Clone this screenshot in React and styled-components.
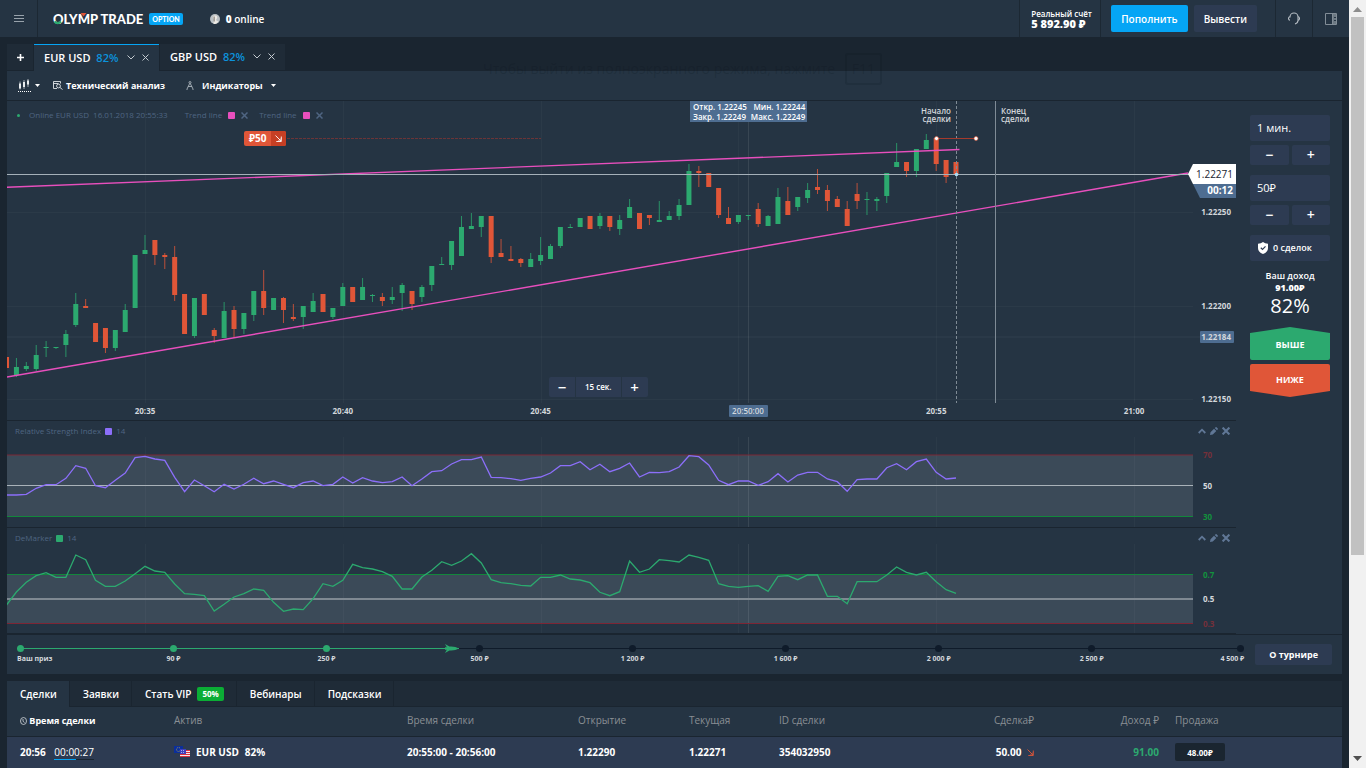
import React from "react";
import styled, { createGlobalStyle, css } from "styled-components";

const STEP = 9.89;
const START = -14;
const columnX = (i) => 138 + STEP * i;
const GRID = [0, 20, 40, 60, 80, 100].map(columnX);
const TIMES = ["20:35", "20:40", "20:45", "", "20:55", "21:00"];

// high, body top, body bottom, low, rising
const CANDLES = [
    [256, 256, 267, 267, 0], [257, 266, 274, 276, 1], [261, 265, 268, 270, 1], [244, 254, 268, 270, 1],
    [240, 246, 247, 256, 1], [246, 246, 247, 248, 1], [229, 233, 244, 256, 1], [192, 203, 224, 226, 1],
    [198, 205, 207, 207, 0], [222, 222, 241, 241, 0], [227, 227, 247, 252, 0], [229, 229, 247, 250, 1],
    [203, 209, 231, 231, 1], [154, 154, 207, 207, 1], [134, 149, 153, 153, 1], [139, 139, 154, 164, 0],
    [152, 154, 156, 168, 0], [145, 156, 194, 200, 0], [193, 193, 233, 233, 0], [197, 197, 235, 237, 1],
    [193, 193, 214, 214, 0], [227, 229, 235, 242, 0], [201, 210, 237, 237, 1], [205, 209, 228, 237, 0],
    [212, 212, 228, 233, 1], [190, 190, 214, 220, 1], [169, 190, 207, 214, 0], [197, 197, 209, 209, 1],
    [196, 197, 209, 222, 0], [203, 216, 218, 220, 0], [205, 205, 216, 228, 1], [192, 200, 211, 211, 1],
    [193, 193, 211, 211, 0], [207, 207, 216, 218, 1], [182, 186, 205, 205, 1], [186, 186, 201, 201, 0],
    [177, 186, 199, 199, 1], [193, 194, 195, 201, 1], [192, 196, 200, 205, 0], [186, 196, 199, 203, 1],
    [182, 184, 192, 210, 1], [190, 190, 203, 209, 0], [184, 186, 196, 201, 1], [165, 165, 184, 190, 1],
    [156, 163, 164, 164, 1], [140, 140, 164, 169, 1], [115, 126, 155, 155, 1], [112, 125, 128, 128, 1],
    [115, 115, 126, 136, 1], [115, 115, 156, 162, 0], [138, 152, 156, 156, 0], [145, 158, 160, 160, 0],
    [157, 158, 162, 166, 0], [152, 158, 166, 166, 1], [136, 154, 160, 164, 1], [143, 145, 158, 158, 1],
    [126, 126, 145, 147, 1], [123, 126, 127, 127, 1], [117, 117, 126, 126, 1], [115, 115, 128, 128, 0],
    [112, 115, 125, 128, 1], [115, 115, 126, 130, 0], [114, 119, 128, 134, 1], [98, 106, 117, 117, 1],
    [112, 112, 128, 128, 0], [114, 114, 117, 124, 0], [100, 119, 121, 121, 1], [110, 115, 119, 119, 1],
    [98, 104, 115, 119, 1], [63, 70, 104, 104, 1], [65, 70, 72, 86, 0], [72, 72, 86, 86, 0],
    [87, 87, 114, 117, 0], [106, 117, 123, 123, 0], [114, 114, 121, 123, 1], [114, 114, 115, 119, 1],
    [102, 108, 123, 126, 0], [114, 115, 125, 125, 1], [87, 96, 123, 123, 1], [86, 100, 114, 114, 0],
    [96, 96, 106, 110, 1], [82, 89, 97, 102, 1], [68, 86, 89, 93, 0], [84, 89, 100, 110, 0],
    [95, 98, 106, 106, 0], [100, 108, 125, 125, 0], [82, 93, 100, 108, 0], [91, 98, 99, 114, 1],
    [96, 98, 100, 110, 1], [72, 72, 95, 102, 1], [42, 61, 66, 66, 1], [61, 61, 70, 76, 0],
    [48, 48, 70, 76, 1], [33, 39, 48, 48, 1], [37, 37, 63, 70, 0], [59, 59, 76, 82, 0],
    [61, 61, 74, 74, 0],
];

const RSI = [
    74, 74, 73.3, 67.3, 63.7, 63.7, 57.3, 44.7, 47.3, 64.7, 66.7, 59.3, 52, 36.7, 35.3, 38, 39.3, 56.3, 70.7, 59,
    64.7, 70.7, 63.3, 68, 63.3, 57.3, 62.7, 60, 63.3, 66.7, 61.7, 60, 64.7, 63.3, 56, 62, 56.7, 60, 61.7, 60.7,
    56, 64.7, 58, 50.7, 49.7, 43, 38.7, 38.7, 36, 56.3, 56.7, 57.7, 59.3, 57.3, 56, 52, 44.7, 44.7, 40.7, 48.7,
    43.3, 50.7, 47.3, 42, 56, 51.3, 51.7, 50.7, 46, 34.7, 35.7, 44, 59.3, 63.7, 60, 60, 64.3, 60.7, 52.7, 61,
    54, 51.3, 51.3, 58, 60.7, 70.3, 58.7, 58, 58, 46.7, 42.7, 48.7, 40.7, 38, 51.3, 58, 57,
];

const DEMARKER = [
    77, 64, 54.3, 47.7, 44.7, 49.3, 49.3, 27, 31.7, 52.3, 58.3, 58.3, 53, 45.7, 38.3, 43, 44.3, 56, 65.7, 66.3,
    67.7, 83, 76.3, 69, 65.7, 61, 62.3, 74.3, 83.3, 81, 81.7, 70.7, 55.7, 58.3, 52.3, 36.3, 39.7, 41, 43.7, 48.3,
    61, 61, 49, 42.3, 33.7, 37.3, 33, 25.7, 35, 51.7, 54.7, 55.7, 57.3, 58, 49.3, 49.3, 47, 51, 52, 54.7,
    64.3, 67.7, 63.7, 33, 44.3, 41, 31.7, 32.7, 34, 27, 29.3, 32.3, 55.7, 58.3, 59.3, 58.3, 57.7, 63.3, 48.3, 47.7,
    51.7, 47, 47, 68.3, 68.3, 75.7, 53.7, 53.7, 53.7, 47, 39, 44.3, 47, 44.3, 53.7, 61.7, 65.3,
];

const toPoints = (values) => values.map((y, i) => `${columnX(START + i).toFixed(1)},${y}`).join(" ");

const PRIZES = ["Ваш приз", "90 ₽", "250 ₽", "500 ₽", "1 200 ₽", "1 600 ₽", "2 000 ₽", "2 500 ₽", "4 500 ₽"];

const CrossIcon = ({ size = 7, width = 1 }) => (
    <svg width={size} height={size} viewBox="0 0 7 7" fill="none" stroke="currentColor" strokeWidth={width}>
        <path d="M.5.5l6 6M6.5.5l-6 6" />
    </svg>
);

const ChevronIcon = () => (
    <svg width="8" height="5" viewBox="0 0 8 5" fill="none" stroke="currentColor">
        <path d="M.5.5L4 4 7.5.5" />
    </svg>
);

const CaretIcon = () => (
    <svg width="5" height="3" viewBox="0 0 5 3" fill="currentColor">
        <path d="M0 0h5L2.500 3z" />
    </svg>
);

const DownRightIcon = () => (
    <svg width="7" height="7" viewBox="0 0 7 7" fill="none" stroke="currentColor" strokeWidth=".9">
        <path d="M.5.5l5.500 5.500M6.300 1.500v5h-5M3.500 6L6 3.500" />
    </svg>
);

const PanelIcons = () => (
    <PanelActions>
        <IconButton aria-label="Свернуть">
            <svg width="8" height="6" viewBox="0 0 8 6" fill="none" stroke="currentColor" strokeWidth="1.800">
                <path d="M.7 5L4 1.700 7.300 5" />
            </svg>
        </IconButton>
        <IconButton aria-label="Изменить">
            <svg width="8" height="8" viewBox="0 0 8 8" fill="currentColor">
                <path d="M0 8l.5-2.800L4 1.700l2.300 2.300L2.800 7.500zM4.700 1l1-.8q.4-.3.800 0l1.300 1.300q.3.400 0 .8L7 3.300z" />
            </svg>
        </IconButton>
        <IconButton aria-label="Закрыть">
            <CrossIcon size={8} width={1.8} />
        </IconButton>
    </PanelActions>
);

const Grid = ({ top, bottom }) => (
    <g stroke="#ffffff" strokeOpacity=".03">
        {GRID.map((x) => (
            <path key={x} d={`M${Math.round(x) + 0.5} ${top}V${bottom}`} />
        ))}
        <path d={`M741.5 ${top}V${bottom}`} strokeOpacity=".09" />
    </g>
);

const PriceChart = () => (
    <ChartSvg viewBox="0 0 1229 319">
        <Grid top={0} bottom={302} />
        <g stroke="#ffffff" strokeOpacity=".03">
            <path d="M0 111.5H1186M0 205.5H1186M0 298.5H1186" />
            <path d="M0 236H1193" strokeOpacity=".06" />
        </g>
        <path d="M280 37.500H534" stroke="#6b3437" strokeDasharray="3 1" />
        {CANDLES.map(([high, top, bottom, low, up], i) => {
            const x = columnX(START + i);
            return (
                <g key={i} fill={up ? "#2ca96f" : "#e05638"}>
                    <rect x={x - 0.5} y={high} width="1" height={low - high} fillOpacity=".8" />
                    <rect x={x - 2.5} y={top} width="5" height={bottom - top} />
                </g>
            );
        })}
        <g stroke="#e84fbd" strokeWidth="1.400">
            <path d="M0 86.300L952.500 48.500" />
            <path d="M0 276L1181 72" />
        </g>
        <path d="M0 73.500H1182" stroke="#a5b0b9" />
        <path d="M949.5 0V302" stroke="#7f8b95" strokeDasharray="3 2" />
        <path d="M988.5 0V302" stroke="#7f8b96" />
        <path d="M929.500 37.500H969" stroke="#a53a2c" />
        <g fill="#ffffff" stroke="#e05638" strokeWidth=".6">
            <circle cx="929.5" cy="37.500" r="2" />
            <circle cx="969" cy="37.500" r="2" />
        </g>
        <circle cx="949.5" cy="73.500" r="1.800" fill="#a9dcf5" />
        <AxisText x="944" y="13" textAnchor="end">Начало</AxisText>
        <AxisText x="944" y="21" textAnchor="end">сделки</AxisText>
        <AxisText x="994" y="13">Конец</AxisText>
        <AxisText x="994" y="21">сделки</AxisText>
        <path d="M1181 73l5-10h43v20h-43z" fill="#ffffff" />
        <path d="M1186 83h43v14h-36z" fill="#4e6d91" />
        <TagText x="1226" y="77" textAnchor="end">1.22271</TagText>
        <TagText x="1226" y="93" textAnchor="end" $light>00:12</TagText>
        <AxisText x="1224" y="114" textAnchor="end" $bold>1.22250</AxisText>
        <AxisText x="1224" y="208" textAnchor="end" $bold>1.22200</AxisText>
        <rect x="1193" y="230" width="34" height="12" rx="1" fill="#4e6d91" />
        <AxisText x="1224" y="239" textAnchor="end" $bold>1.22184</AxisText>
        <AxisText x="1224" y="301" textAnchor="end" $bold>1.22150</AxisText>
        {TIMES.map((time, i) => (
            <AxisText key={i} x={GRID[i]} y="313" textAnchor="middle" $bold>{time}</AxisText>
        ))}
        <rect x="722" y="304" width="39" height="12" rx="1" fill="#4e6d91" />
        <AxisText x="741" y="313" textAnchor="middle">20:50:00</AxisText>
    </ChartSvg>
);

const Oscillator = ({ title, period, color, values, height, lines, middleWidth = 1 }) => (
    <Panel>
        <Legend $small>
            {title} <Swatch $color={color} /> {period}
        </Legend>
        <PanelIcons />
        <ChartSvg viewBox={`0 0 1229 ${height}`}>
            <rect x="0" y={lines[0].y} width="1186" height={lines[2].y - lines[0].y} fill="#3b4a58" />
            <Grid top={16} bottom={height} />
            {lines.map(({ y, text, stroke, fill }, i) => (
                <g key={text}>
                    <path d={`M0 ${y}H1186`} stroke={stroke} strokeWidth={i === 1 ? middleWidth : 1} />
                    <AxisText x="1196" y={Math.round(y) + 3} $fill={fill} $bold>{text}</AxisText>
                </g>
            ))}
            <polyline points={toPoints(values)} fill="none" stroke={color} strokeWidth="1.300" />
        </ChartSvg>
    </Panel>
);

const Flags = () => (
    <svg width="16" height="12" viewBox="0 0 16 12">
        <path d="M0 0h9v7H0z" fill="#0b2f9c" />
        <circle cx="4.500" cy="3.500" r="2" fill="none" stroke="#b9a544" strokeWidth=".8" strokeDasharray="1 .8" />
        <path d="M6 4h10v7H6z" fill="#f3e9ec" />
        <path d="M6 6.500h10M6 8.500h10M6 10.500h10M11 4.500h5" stroke="#d9313f" />
        <path d="M6 3h6v5H6z" fill="#3d3fbd" />
        <path d="M7 4.500h4M7 6.500h4" stroke="#a9a6ea" strokeDasharray="1 1" />
    </svg>
);

const App = () => {
    return (
        <Page>
            <GlobalStyle />
            <Main>
                <Header>
                    <MenuButton aria-label="Меню">
                        <svg width="10" height="7" viewBox="0 0 10 7" stroke="#98a2ab">
                            <path d="M0 .5h10M0 3.500h10M0 6.500h10" />
                        </svg>
                    </MenuButton>
                    <Logo href="#">
                        <LogoName>
                            OLYMP TRADE
                            <LogoMarks viewBox="0 0 92 14">
                                <path d="M1.500 9.500a4.200 4.200 0 0 0 6.500 0" fill="none" stroke="#2ca96f" strokeWidth="2.200" />
                                <path d="M27.500 1h6l-3 3.500z" fill="#e05638" />
                            </LogoMarks>
                        </LogoName>
                        <OptionBadge>OPTION</OptionBadge>
                    </Logo>
                    <Online>
                        <svg width="10" height="10" viewBox="0 0 10 10">
                            <circle cx="5" cy="5" r="5" fill="#b9bfc4" />
                            <path d="M5 1.500a2 2 0 0 1 1.300 3.700v1.300l2 1A5 5 0 0 1 5 10a5 5 0 0 1-1.500-.3V5A2 2 0 0 1 5 1.500z" fill="#ece9e4" />
                            <path d="M3.600 2.500h1v5h-1z" fill="#716b66" />
                        </svg>
                        <span><b>0</b> online</span>
                    </Online>
                    <Account>
                        <span>Реальный счёт</span>
                        <strong>5 892.90 ₽</strong>
                    </Account>
                    <HeaderActions>
                        <Button $primary>Пополнить</Button>
                        <Button>Вывести</Button>
                    </HeaderActions>
                    <HeaderIcon aria-label="Поддержка">
                        <svg width="12" height="13" viewBox="0 0 12 13" fill="none" stroke="#b6bdc4" strokeWidth="1.100">
                            <path d="M2 5.500V5a4 4 0 0 1 8 0v3.500q0 2.500-3 3.500" />
                            <path d="M2 4.800Q.5 5 .5 6.500T2 8.200M10 4.800q1.500.2 1.500 1.700T10 8.200" />
                        </svg>
                    </HeaderIcon>
                    <HeaderIcon aria-label="Панель">
                        <svg width="12" height="12" viewBox="0 0 12 12" fill="none" stroke="#828d97">
                            <path d="M.5.5h11v11H.5zM7.500.5v11" />
                            <path d="M8 1h3v10H8z" fill="#6d7983" stroke="none" />
                            <path d="M9 4.500h2M9 7.500h2" stroke="#253443" />
                        </svg>
                    </HeaderIcon>
                </Header>

                <PairTabs>
                    <AddTab aria-label="Добавить">
                        <svg width="7" height="7" viewBox="0 0 7 7" stroke="#ffffff" strokeWidth="1.600">
                            <path d="M3.500 0v7M0 3.500h7" />
                        </svg>
                    </AddTab>
                    {["EUR USD", "GBP USD"].map((pair, i) => (
                        <PairTab key={pair} $active={i === 0}>
                            <PairName>{pair} <em>82%</em></PairName>
                            <IconButton $light aria-label="Выбрать"><ChevronIcon /></IconButton>
                            <IconButton $light aria-label="Закрыть"><CrossIcon /></IconButton>
                        </PairTab>
                    ))}
                    <FullscreenHint>
                        Чтобы выйти из полноэкранного режима, нажмите <kbd>F11</kbd>
                    </FullscreenHint>
                </PairTabs>

                <Workspace>
                    <Toolbar>
                        <ToolButton>
                            <svg width="13" height="13" viewBox="0 0 13 13" fill="#ffffff">
                                <path d="M1 4.500h2v5H1zM5 3h2v5H5zM9 1.500h2v4H9z" />
                                <path d="M2 2.500v8M6 1v9M10 0v8" stroke="#c5ccd2" strokeWidth=".8" />
                                <path d="M0 12.500h13" stroke="#ffffff" strokeDasharray="1 1" />
                            </svg>
                            <CaretIcon />
                        </ToolButton>
                        <ToolButton $wide>
                            <svg width="10" height="9" viewBox="0 0 10 9" fill="none" stroke="#dfe3e6" strokeWidth=".9">
                                <path d="M4 7.500H.5v-7h7v2M.5 2.500h5" />
                                <circle cx="5.500" cy="5" r="1.900" />
                                <path d="M7 6.500l2.500 2" />
                            </svg>
                            Технический анализ
                        </ToolButton>
                        <ToolButton>
                            <svg width="8" height="9" viewBox="0 0 8 9" fill="none" stroke="#aab3bb" strokeWidth=".9">
                                <circle cx="4" cy="1.500" r="1" />
                                <path d="M3.700 2.500L1 8M4.300 2.500L7 8M2 5.500h4M.5 8.500h1M6.500 8.500h1" />
                            </svg>
                            <ToolLabel>Индикаторы</ToolLabel>
                            <CaretIcon />
                        </ToolButton>
                    </Toolbar>

                    <Board>
                        <Charts>
                            <Panel>
                                <Legend>
                                    <LiveDot />
                                    <span>Online EUR USD&nbsp; 16.01.2018 20:55:33</span>
                                    <TrendItem>Trend line <Swatch $color="#e84fbd" /> <CrossIcon width={1.5} /></TrendItem>
                                    <TrendItem>Trend line <Swatch $color="#e84fbd" /> <CrossIcon width={1.5} /></TrendItem>
                                </Legend>
                                <PriceChart />
                                <Quote>
                                    <span>Откр. 1.22245</span>
                                    <span>Мин. 1.22244</span>
                                    <span>Закр. 1.22249</span>
                                    <span>Макс. 1.22249</span>
                                </Quote>
                                <DealBadge>
                                    <b>₽50</b>
                                    <i><DownRightIcon /></i>
                                </DealBadge>
                                <Interval>
                                    <button aria-label="Уменьшить интервал">−</button>
                                    <span>15 сек.</span>
                                    <button aria-label="Увеличить интервал">+</button>
                                </Interval>
                            </Panel>
                            <Oscillator
                                title="Relative Strength Index"
                                period="14"
                                color="#8c6ffa"
                                values={RSI}
                                height={106}
                                lines={[
                                    { y: 34, text: "70", stroke: "#7d2635", fill: "#76303a" },
                                    { y: 64.5, text: "50", stroke: "#a9b2b9" },
                                    { y: 95.5, text: "30", stroke: "#12873b", fill: "#12923d" },
                                ]}
                            />
                            <Oscillator
                                title="DeMarker"
                                period="14"
                                color="#2ca96f"
                                values={DEMARKER}
                                height={105}
                                middleWidth={2}
                                lines={[
                                    { y: 46.5, text: "0.7", stroke: "#12873b", fill: "#12923d" },
                                    { y: 71, text: "0.5", stroke: "#7f8992" },
                                    { y: 95.5, text: "0.3", stroke: "#7d2635", fill: "#76303a" },
                                ]}
                            />
                        </Charts>

                        <TradePanel>
                            <Field aria-label="Время" defaultValue="1 мин." />
                            <Steps>
                                <StepButton>−</StepButton>
                                <StepButton>+</StepButton>
                            </Steps>
                            <Field aria-label="Сумма" defaultValue="50₽" />
                            <Steps>
                                <StepButton>−</StepButton>
                                <StepButton>+</StepButton>
                            </Steps>
                            <DealsButton>
                                <svg width="10" height="12" viewBox="0 0 10 12">
                                    <path d="M5 0q2 1.500 5 1.700V6q0 4-5 6Q0 10 0 6V1.700Q3 1.500 5 0z" fill="#ffffff" />
                                    <path d="M2.800 5.800l1.700 1.600 3-3" fill="none" stroke="#2d3b52" strokeWidth="1.200" />
                                </svg>
                                0 сделок
                            </DealsButton>
                            <Income>
                                <span>Ваш доход</span>
                                <b>91.00₽</b>
                                <strong>82%</strong>
                            </Income>
                            <CallButton>ВЫШЕ</CallButton>
                            <PutButton>НИЖЕ</PutButton>
                        </TradePanel>
                    </Board>

                    <Tournament>
                        <Prizes>
                            <Progress>
                                <svg width="14" height="9" viewBox="0 0 14 9" fill="#2ca96f">
                                    <path d="M0 0l4.500 2.500Q10 2 14 4.500 10 7 4.500 6.500L0 9l1.800-3.300H0V3.300h1.800z" />
                                </svg>
                            </Progress>
                            {PRIZES.map((prize, i) => (
                                <Prize key={prize} $done={i < 3}>{prize}</Prize>
                            ))}
                        </Prizes>
                        <TournamentButton>О турнире</TournamentButton>
                    </Tournament>
                </Workspace>

                <Deals>
                    <DealTabs>
                        <DealTab $active>Сделки</DealTab>
                        <DealTab>Заявки</DealTab>
                        <DealTab>Стать VIP <VipBadge>50%</VipBadge></DealTab>
                        <DealTab>Вебинары</DealTab>
                        <DealTab>Подсказки</DealTab>
                    </DealTabs>
                    <Table>
                        <colgroup>
                            {[154, 233, 171, 111, 90, 150, 121, 125, 180].map((width, i) => (
                                <Col key={i} $width={width} />
                            ))}
                        </colgroup>
                        <thead>
                            <tr>
                                <Th $sorted>
                                    <svg width="7" height="8" viewBox="0 0 7 8" fill="none" stroke="#d5dade" strokeWidth=".8">
                                        <ellipse cx="3.500" cy="4" rx="3" ry="3.500" />
                                        <path d="M3 2v2.300l1.500 1.200" />
                                    </svg>{" "}
                                    Время сделки
                                </Th>
                                <Th>Актив</Th>
                                <Th>Время сделки</Th>
                                <Th>Открытие</Th>
                                <Th>Текущая</Th>
                                <Th>ID сделки</Th>
                                <Th $right>Сделка₽</Th>
                                <Th $right>Доход ₽</Th>
                                <Th>Продажа</Th>
                            </tr>
                        </thead>
                        <tbody>
                            <tr>
                                <Td>20:56 <Countdown>00:00:27</Countdown></Td>
                                <Td><Asset><Flags /> EUR USD <span>82%</span></Asset></Td>
                                <Td>20:55:00 - 20:56:00</Td>
                                <Td>1.22290</Td>
                                <Td>1.22271</Td>
                                <Td>354032950</Td>
                                <Td $right>50.00 <Down><DownRightIcon /></Down></Td>
                                <Td $right $green>91.00</Td>
                                <Td><SellButton>48.00₽</SellButton></Td>
                            </tr>
                        </tbody>
                    </Table>
                </Deals>
            </Main>
            <Scrollbar>
                <svg width="9" height="5" viewBox="0 0 9 5" fill="#8d8d8d"><path d="M4.500 0L9 5H0z" /></svg>
                <Thumb />
                <svg width="9" height="5" viewBox="0 0 9 5" fill="#505050"><path d="M4.500 5L9 0H0z" /></svg>
            </Scrollbar>
        </Page>
    );
};

const GlobalStyle = createGlobalStyle`
    * {
        box-sizing: border-box;
    }

    body {
        margin: 0;
        background: #1a2530;
        color: #ffffff;
        font-family: "Open Sans", "Noto Sans", sans-serif;
        font-size: 10px;
    }

    button, input {
        margin: 0;
        padding: 0;
        border: 0;
        background: none;
        color: inherit;
        font: inherit;
    }

    button {
        cursor: pointer;
    }
`;

const Page = styled.div`
    display: flex;
    height: 100vh;
    overflow: hidden;
`;

const Main = styled.div`
    flex: 1;
    min-width: 0;
`;

const Header = styled.header`
    display: flex;
    height: 37px;
    background: #253443;
    margin-bottom: 7px;
`;

const MenuButton = styled.button`
    display: flex;
    align-items: center;
    justify-content: center;
    width: 38px;
    border-right: 1px solid #1c2833;
`;

const Logo = styled.a`
    display: flex;
    align-items: center;
    gap: 6px;
    margin-left: 15px;
    color: #ffffff;
    text-decoration: none;
`;

const LogoName = styled.span`
    position: relative;
    font: 900 13px/14px Lato, sans-serif;
`;

const LogoMarks = styled.svg`
    position: absolute;
    left: 0;
    top: 0;
    width: 92px;
    height: 14px;
`;

const OptionBadge = styled.span`
    padding: 0 3px;
    border-radius: 2px;
    background: #05a5f5;
    font: 900 7px/12px Lato, sans-serif;
`;

const Online = styled.div`
    display: flex;
    align-items: center;
    gap: 6px;
    margin-left: 27px;
    font-weight: 600;
`;

const Account = styled.div`
    display: flex;
    flex-direction: column;
    justify-content: center;
    width: 82px;
    margin-left: auto;
    padding-left: 11px;
    border-left: 1px solid #1c2833;
    border-right: 1px solid #1c2833;
    font-size: 8px;
    font-weight: 600;
    line-height: 9px;

    strong {
        font-size: 11px;
        line-height: 11px;
    }
`;

const HeaderActions = styled.div`
    display: flex;
    align-items: center;
    gap: 6px;
    padding: 0 18px 0 10px;
`;

const Button = styled.button`
    height: 27px;
    padding: 0 10px;
    border-radius: 2px;
    background: ${({ $primary }) => ($primary ? "#05a5f5" : "#2d3b52")};
    font-weight: 600;
`;

const HeaderIcon = styled.button`
    display: flex;
    align-items: center;
    justify-content: center;
    width: 37px;
    border-left: 1px solid #1c2833;
`;

const IconButton = styled.button`
    display: flex;
    align-items: center;
    color: ${({ $light }) => ($light ? "#c3cad0" : "#607796")};
`;

const PairTabs = styled.nav`
    position: relative;
    display: flex;
    gap: 1px;
    height: 27px;
    margin: 0 7px;
`;

const AddTab = styled.button`
    display: flex;
    align-items: center;
    justify-content: center;
    width: 26px;
    height: 26px;
    background: #1f2b37;
`;

const PairTab = styled.div`
    display: flex;
    align-items: center;
    gap: 7px;
    width: 125px;
    height: ${({ $active }) => ($active ? 27 : 26)}px;
    padding: 0 10px 2px;
    border-top: 1px solid ${({ $active }) => ($active ? "#05a5f5" : "#1f2b37")};
    background: ${({ $active }) => ($active ? "#253443" : "#1f2b37")};
`;

const PairName = styled.span`
    flex: 1;
    font-size: 11px;
    font-weight: 600;
    white-space: nowrap;

    em {
        margin-left: 3px;
        color: #0c93dc;
        font-style: normal;
    }
`;

const FullscreenHint = styled.div`
    position: absolute;
    left: 476px;
    top: 9px;
    color: rgba(10, 20, 30, 0.2);
    font-size: 14px;
    line-height: 32px;
    white-space: nowrap;
    pointer-events: none;

    kbd {
        display: inline-block;
        margin-left: 6px;
        padding: 0 5px;
        border: 2px solid rgba(10, 20, 30, 0.15);
        border-radius: 3px;
        font: inherit;
        line-height: 28px;
    }
`;

const Workspace = styled.main`
    margin: 0 7px 7px;
    background: #253443;
`;

const Toolbar = styled.div`
    display: flex;
    align-items: center;
    height: 30px;
    padding-left: 11px;
    border-bottom: 1px solid #1a2530;
`;

const ToolButton = styled.button`
    display: flex;
    align-items: center;
    gap: ${({ $wide }) => ($wide ? 3 : 4)}px;
    margin-right: ${({ $wide }) => ($wide ? 21 : 13)}px;
    font-size: 9px;
    font-weight: 700;
`;

const ToolLabel = styled.span`
    margin: 0 4px;
`;

const Board = styled.div`
    display: flex;
`;

const Charts = styled.div`
    flex: 1;
    min-width: 0;
`;

const Panel = styled.section`
    position: relative;
    border-bottom: 1px solid #1a2530;
`;

const ChartSvg = styled.svg`
    display: block;
    width: 100%;
`;

const AxisText = styled.text`
    fill: ${({ $fill }) => $fill || "#d3d7db"};
    font-size: 8px;
    font-weight: ${({ $bold }) => ($bold ? 700 : 600)};
`;

const TagText = styled.text`
    fill: ${({ $light }) => ($light ? "#ffffff" : "#1a2530")};
    font-size: 10px;
    font-weight: ${({ $light }) => ($light ? 700 : 400)};
`;

const Legend = styled.div`
    position: absolute;
    left: 8px;
    top: ${({ $small }) => ($small ? 4 : 8)}px;
    display: flex;
    align-items: center;
    gap: ${({ $small }) => ($small ? 4 : 11)}px;
    color: #4f6582;
    font-size: 8px;
    line-height: 12px;
`;

const LiveDot = styled.span`
    width: 3px;
    height: 3px;
    margin: 0 -2px 0 2px;
    border-radius: 50%;
    background: #2ca96f;

    & + span {
        margin-right: 6px;
    }
`;

const TrendItem = styled.span`
    display: flex;
    align-items: center;
    gap: 6px;
`;

const Swatch = styled.i`
    width: 7px;
    height: 7px;
    border-radius: 1px;
    background: ${({ $color }) => $color};
`;

const PanelActions = styled.div`
    position: absolute;
    top: 6px;
    right: 6px;
    display: flex;
    gap: 4px;
`;

const Quote = styled.div`
    position: absolute;
    left: 683px;
    top: 0;
    display: grid;
    grid-template-columns: auto auto;
    column-gap: 4px;
    padding: 1px 2px 0 3px;
    background: #4e6d91;
    font-size: 8px;
    font-weight: 600;
    line-height: 10px;

    span:nth-child(even) {
        text-align: right;
    }
`;

const DealBadge = styled.div`
    position: absolute;
    left: 237px;
    top: 30px;
    display: flex;
    height: 15px;
    border-radius: 2px;
    overflow: hidden;
    background: #e05638;
    line-height: 14px;

    b {
        padding: 0 5px;
    }

    i {
        display: flex;
        align-items: center;
        padding: 0 4px;
        background: #c63f24;
    }
`;

const Interval = styled.div`
    position: absolute;
    left: 542px;
    bottom: 23px;
    display: flex;
    gap: 1px;
    height: 20px;
    font-size: 8px;
    font-weight: 600;
    line-height: 20px;

    button,
    span {
        background: #2d3b52;
    }

    span {
        padding: 0 9px;
    }

    button {
        width: 26px;
        font-size: 15px;
        line-height: 18px;
    }

    button:first-child {
        border-radius: 2px 0 0 2px;
    }

    button:last-child {
        border-radius: 0 2px 2px 0;
    }
`;

const TradePanel = styled.aside`
    width: 106px;
    padding: 14px 12px 0 14px;
`;

const fieldBox = css`
    width: 100%;
    height: 26px;
    border-radius: 2px;
    background: #2d3b52;
`;

const Field = styled.input`
    ${fieldBox}
    display: block;
    padding: 0 7px 2px;
    font-size: 11px;
    outline: none;
`;

const Steps = styled.div`
    display: grid;
    grid-template-columns: 1fr 1fr;
    gap: 3px;
    margin: 4px 0 10px;
`;

const StepButton = styled.button`
    height: 20px;
    border-radius: 2px;
    background: #2d3b52;
    font-size: 14px;
    font-weight: 600;
    line-height: 18px;
`;

const DealsButton = styled.button`
    ${fieldBox}
    display: flex;
    align-items: center;
    gap: 5px;
    padding: 0 8px 1px;
    font-size: 9px;
    font-weight: 600;
`;

const Income = styled.div`
    display: flex;
    flex-direction: column;
    align-items: center;
    margin: 9px 0;
    font-size: 9px;
    font-weight: 600;
    line-height: 12px;

    strong {
        font-size: 20px;
        font-weight: 400;
        line-height: 24px;
    }
`;

const CallButton = styled.button`
    display: block;
    width: 100%;
    height: 33px;
    margin-bottom: 4px;
    border-radius: 2px;
    background: #2ca96f;
    clip-path: polygon(0 6px, 50% 0, 100% 6px, 100% 100%, 0 100%);
    font-size: 9px;
    font-weight: 700;
    padding-top: 2px;
`;

const PutButton = styled(CallButton)`
    margin-bottom: 0;
    padding: 0 0 2px;
    background: #e05638;
    clip-path: polygon(0 0, 100% 0, 100% 27px, 50% 100%, 0 27px);
`;

const Tournament = styled.section`
    display: flex;
    align-items: center;
    gap: 11px;
    height: 40px;
    padding: 0 10px;
    border-top: 1px solid #1a2530;
`;

const Prizes = styled.ul`
    position: relative;
    flex: 1;
    display: grid;
    grid-template-columns: 80fr repeat(7, 153fr) 76fr;
    margin: 0;
    padding: 0;
    list-style: none;
    background: linear-gradient(#0f1b2a, #0f1b2a) 0 3px / 100% 1px no-repeat;
`;

const Progress = styled.div`
    position: absolute;
    left: 0;
    top: 3px;
    display: flex;
    justify-content: flex-end;
    align-items: center;
    width: 36%;
    height: 1px;
    background: #2ca96f;

    svg {
        flex: none;
    }
`;

const Prize = styled.li`
    position: relative;
    display: flex;
    flex-direction: column;
    align-items: center;
    color: #d3d7db;
    font-size: 7px;
    font-weight: 700;
    line-height: 13px;

    &::before {
        content: "";
        width: 7px;
        height: 7px;
        border-radius: 50%;
        background: ${({ $done }) => ($done ? "#2ca96f" : "#0f1b2a")};
    }

    &:nth-child(2) {
        align-items: flex-start;
    }

    &:last-child {
        align-items: flex-end;
    }
`;

const TournamentButton = styled.button`
    height: 21px;
    padding: 0 14px 1px;
    border-radius: 2px;
    background: #2d3b52;
    font-size: 9px;
    font-weight: 700;
`;

const Deals = styled.section`
    margin: 0 7px;
    background: #253443;
`;

const DealTabs = styled.nav`
    display: flex;
    height: 26px;
    background: #1f2b37;
    border-bottom: 1px solid #1a2530;
`;

const DealTab = styled.button`
    display: flex;
    align-items: center;
    gap: 6px;
    height: 26px;
    padding: 0 12px 0 13px;
    border-right: 1px solid #1a2530;
    background: ${({ $active }) => ($active ? "#253443" : "transparent")};
    font-weight: 600;
`;

const VipBadge = styled.span`
    padding: 0 5px;
    border-radius: 2px;
    background: #0bad35;
    font-size: 8px;
    font-weight: 700;
    line-height: 14px;
`;

const Table = styled.table`
    width: 100%;
    table-layout: fixed;
    border-collapse: collapse;
`;

const Col = styled.col`
    width: ${({ $width }) => $width}px;
`;

const Th = styled.th`
    height: 29px;
    padding: 0 3px 2px 13px;
    border-bottom: 1px solid #1a2530;
    color: ${({ $sorted }) => ($sorted ? "#ffffff" : "#8a8f94")};
    font-size: ${({ $sorted }) => ($sorted ? 9 : 10)}px;
    font-weight: ${({ $sorted }) => ($sorted ? 700 : 400)};
    text-align: ${({ $right }) => ($right ? "right" : "left")};
    white-space: nowrap;

    svg {
        vertical-align: -1px;
    }
`;

const Td = styled.td`
    height: 33px;
    padding: 0 3px 1px 13px;
    background: #2d3b52;
    color: ${({ $green }) => ($green ? "#2ca96f" : "#ffffff")};
    font-weight: 700;
    text-align: ${({ $right }) => ($right ? "right" : "left")};
    white-space: nowrap;
`;

const Countdown = styled.span`
    margin-left: 6px;
    padding-bottom: 1px;
    background: linear-gradient(90deg, #05a5f5 54%, #1a2530 54%) 0 100% / 100% 1px no-repeat;
    font-weight: 400;
`;

const Asset = styled.div`
    display: flex;
    align-items: center;
    gap: 6px;
`;

const Down = styled.span`
    margin-left: 3px;
    color: #e05638;
`;

const SellButton = styled.button`
    width: 50px;
    height: 18px;
    border-radius: 2px;
    background: #1a2530;
    font-size: 8px;
    font-weight: 700;
`;

const Scrollbar = styled.div`
    display: flex;
    flex-direction: column;
    align-items: center;
    width: 17px;
    padding: 7px 0;
    background: #f1f1f1;
`;

const Thumb = styled.div`
    width: 13px;
    height: 70vh;
    margin: 5px 0 auto;
    background: #c1c1c1;
`;

export default App;
